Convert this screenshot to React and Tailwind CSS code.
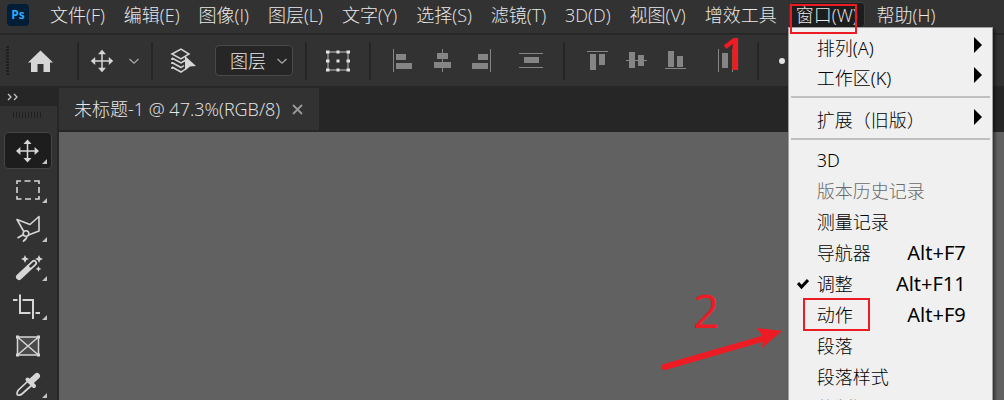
import React from "react";

const menus = ["文件(F)", "编辑(E)", "图像(I)", "图层(L)", "文字(Y)", "选择(S)", "滤镜(T)", "3D(D)", "视图(V)", "增效工具", "窗口(W)", "帮助(H)"];

const entries = [
  { label: "排列(A)", sub: true },
  { label: "工作区(K)", sub: true },
  { rule: true },
  { label: "扩展（旧版）", sub: true },
  { rule: true },
  { label: "3D" },
  { label: "版本历史记录", disabled: true },
  { label: "测量记录" },
  { label: "导航器", keys: "Alt+F7" },
  { label: "调整", keys: "Alt+F11", checked: true },
  { label: "动作", keys: "Alt+F9", marked: true },
  { label: "段落" },
  { label: "段落样式" },
  { label: "仿制源" },
];

function MoveIcon() {
  return (
    <svg width="24" height="24" viewBox="0 0 24 24" className="shrink-0" aria-hidden="true">
      <path d="M12 3v18M3 12h18" stroke="#d6d6d6" strokeWidth="1.5" />
      <path d="M12 .8l4 4.4H8zM12 23.2l4-4.4H8zM.8 12l4.4-4v8zM23.2 12l-4.4-4v8z" fill="#d6d6d6" />
    </svg>
  );
}

function Chevron() {
  return (
    <svg width="12" height="8" viewBox="0 0 12 8" className="shrink-0" fill="none" stroke="#a8a8a8" strokeWidth="1.3" aria-hidden="true">
      <path d="M1.5 2L6 6.2 10.5 2" />
    </svg>
  );
}

const tools = [
  { name: "移动工具", active: true, more: true, art: <g><path d="M14.500 5v18M5.500 14h18" stroke="#d6d6d6" strokeWidth="1.5" /><path d="M14.500 2.6l4 4.4h-8zM14.500 25.400l4-4.400h-8zM3 14L7.400 10v8zM26 14L21.600 10v8z" fill="#d6d6d6" /></g> },
  { name: "矩形选框工具", more: true, art: <path d="M4 8V5h4M11.500 5h6M21 5h5v3M26 11v6M26 20v3h-4M18 23h-6M8.500 23H4v-3M4 17v-6" fill="none" stroke="#d6d6d6" strokeWidth="1.6" /> },
  { name: "套索工具", more: true, art: <g fill="none" stroke="#d6d6d6" strokeWidth="1.6" strokeLinejoin="round"><path d="M10.500 16L4 4.500l13 5L26 1.500V16l-10.500 4" /><circle cx="13" cy="18.500" r="2.800" /><path d="M10.500 19.500L4.500 23M14 21.500q-.5 2.500-4 5" /></g> },
  { name: "魔棒工具", more: true, art: <g><path d="M6 23L21 9" stroke="#d6d6d6" strokeWidth="6" strokeLinecap="round" /><path d="M17.500 12.200L21 9" stroke="#323232" strokeWidth="2.600" strokeLinecap="round" /><path d="M12 1l1.200 2.800L16 5l-2.800 1.200L12 9l-1.200-2.800L8 5l2.800-1.200zM26 1l1.200 2.800L30 5l-2.800 1.200L26 9l-1.200-2.800L22 5l2.800-1.200zM25.500 12l.9 2 2 .9-2 .9-.9 2-.9-2-2-.9 2-.9z" fill="#d6d6d6" /></g> },
  { name: "裁剪工具", more: true, art: <g fill="none" stroke="#d6d6d6" strokeWidth="2"><path d="M0 7h4.500M7 1.500V20h10.500M9.500 7H20v19M22.500 20H27" /></g> },
  { name: "图框工具", art: <g fill="none" stroke="#d6d6d6" strokeWidth="1.500"><path d="M4.500 5h21v18h-21z" fill="#4a4a4a" /><path d="M4.500 5l21 18M25.500 5l-21 18" /><path d="M3 3.500h3v3H3zM24 3.500h3v3h-3zM3 21.500h3v3H3zM24 21.500h3v3h-3z" fill="#d6d6d6" stroke="none" /></g> },
  { name: "吸管工具", more: true, art: <g><path d="M15 10L5 19.500q-2 4 0 4.500 2 .8 4.500-1.500L19 14" fill="none" stroke="#d6d6d6" strokeWidth="1.700" /><path d="M14.500 8.500l6.500 6.500" stroke="#d6d6d6" strokeWidth="4" strokeLinecap="round" /><path d="M18 10.500L24 5" stroke="#d6d6d6" strokeWidth="6" strokeLinecap="round" /></g> },
];

function Tool({ tool }) {
  return (
    <button
      aria-label={tool.name}
      className={"relative flex h-[37px] w-12 items-center justify-center rounded border " + (tool.active ? "border-[#444444] bg-[#1d1d1d]" : "border-transparent")}
    >
      <svg width="30" height="28" viewBox="0 0 30 28" aria-hidden="true">{tool.art}</svg>
      {tool.more && (
        <svg width="5" height="5" viewBox="0 0 5 5" className="absolute right-1 bottom-1" aria-hidden="true">
          <path d="M5 0v5H0z" fill="#c4c4c4" />
        </svg>
      )}
    </button>
  );
}

const alignments = {
  left: ["左对齐", "M2.500 2v23", "M5 7h10v6H5zM5 16h16v6H5z"],
  center: ["水平居中对齐", "M12.500 2v23", "M7 6h11v6H7zM4 15h17v6H4z"],
  right: ["右对齐", "M21.500 2v23", "M9 7h10v6H9zM3 16h16v6H3z"],
  spread: ["垂直分布", "M0 6.500h24M0 20.500h24", "M5 10h15v6H5z"],
  top: ["顶对齐", "M2 4.500h21", "M5 7h6v16H5zM14 7h6v11h-6z"],
  middle: ["垂直居中对齐", "M2 13.500h21", "M5 5h6v16H5zM14 8h6v11h-6z"],
  bottom: ["底对齐", "M2 21.500h21", "M5 4h6v16H5zM14 9h6v11h-6z"],
  distribute: ["水平分布", "M5.500 2v23M19.500 2v23", "M9 6h6v15H9z"],
};

function Align({ kind }) {
  const [name, line, bars] = alignments[kind];
  return (
    <button aria-label={name} className="shrink-0">
      <svg width="24" height="28" viewBox="0 0 24 28" aria-hidden="true">
        <path d={line} stroke="#858585" />
        <path d={bars} fill="#858585" />
      </svg>
    </button>
  );
}

function Divider() {
  return <div className="h-[38px] w-0.5 shrink-0 bg-[#262626]" />;
}

function WindowMenu() {
  return (
    <div role="menu" className="absolute top-[27px] -left-px z-10 w-[205px] border border-[#a0a0a0] bg-[#f0f0f0] pt-0.5 font-['Noto_Sans','Noto_Sans_CJK_SC',sans-serif] text-black shadow-[2px_2px_3px_rgba(0,0,0,0.5)]">
      {entries.map((e, i) =>
        e.rule ? (
          <div key={i} role="separator" className="mx-0.5 mt-1.5 mb-1 h-0.5 bg-[#bfbfbf]" />
        ) : (
          <button key={i} role="menuitem" disabled={e.disabled} className={"relative flex w-full items-center pr-[26px] pl-7 " + (e.sub ? "h-[30px] pt-1.5" : "h-[31px]") + (e.disabled ? " text-[#6a6a6a]" : "")}>
            {e.checked && (
              <svg width="12" height="12" viewBox="0 0 12 12" className="absolute left-2" fill="none" stroke="#000" strokeWidth="3" aria-hidden="true">
                <path d="M1 5l3.500 4L11 2" />
              </svg>
            )}
            <span>{e.label}</span>
            {e.keys && <span className="ml-auto text-xl leading-6 font-normal">{e.keys}</span>}
            {e.sub && (
              <svg width="8" height="16" viewBox="0 0 8 16" className="absolute top-[7px] right-2.5" aria-hidden="true">
                <path d="M0 0l8 8-8 8z" />
              </svg>
            )}
            {e.marked && <span className="absolute -top-px left-3.5 h-[33px] w-[67px] border-2 border-[#ed1c24]" />}
          </button>
        )
      )}
    </div>
  );
}

export default function App() {
  return (
    <div className="flex h-screen flex-col overflow-hidden bg-[#323232] font-['Open_Sans','Noto_Sans_CJK_SC',sans-serif] text-[18px] leading-6 font-light whitespace-nowrap text-[#e8e8e8]">
      <header className="flex h-[35px] shrink-0 items-start border-b-2 border-[#272727] pl-[7px]">
        <div className="mt-1 flex size-[22px] shrink-0 items-center justify-center rounded bg-[#001e36] text-xs font-bold text-[#31a8ff]">Ps</div>
        <nav className="ml-3 flex gap-px">
          {menus.map((m) =>
            m === "窗口(W)" ? (
              <div key={m} className="relative mx-0.5">
                <button className="mt-0.5 h-[26px] rounded border border-[#3e3e3e] bg-[#1d1d1d] px-1.5 leading-6">{m}</button>
                <span className="absolute top-1 left-px z-20 h-[30px] w-[67px] border-2 border-[#ed1c24]" />
                <WindowMenu />
              </div>
            ) : (
              <button key={m} className="mt-0.5 h-[26px] px-[9px]">{m}</button>
            )
          )}
        </nav>
      </header>

      <div className="relative flex h-[53px] shrink-0 items-center border-b-2 border-[#272727] pl-1.5">
        <svg width="3" height="30" className="shrink-0" aria-hidden="true"><path d="M1.500 0v30" stroke="#1f1f1f" strokeWidth="3" strokeDasharray="2 1" /></svg>
        <button aria-label="主页" className="ml-[18px]">
          <svg width="26" height="24" viewBox="0 0 26 24" aria-hidden="true"><path d="M13.500 1.500L26 13.500h-3V23h-6.500v-8h-6v8H4v-9.500H1z" fill="#d6d6d6" /></svg>
        </button>
        <div className="ml-6"><Divider /></div>
        <button aria-label="移动工具选项" className="ml-[11px] flex items-center gap-3.5"><MoveIcon /><Chevron /></button>
        <div className="ml-[11px]"><Divider /></div>
        <button aria-label="自动选择" className="ml-4">
          <svg width="28" height="28" viewBox="0 0 28 28" fill="none" stroke="#d6d6d6" strokeWidth="1.500" aria-hidden="true">
            <path d="M3 7l9-5 8 5-8 5zM3 11l9 5 5-3M3 15.500l9 5 3-2M3 20l9 5 6-4M3 11v2M3 15v2M3 20v2" />
            <path d="M16 9l11 10-6 .5-5 4z" fill="#d6d6d6" stroke="none" />
          </svg>
        </button>
        <button className="ml-[18px] flex h-[31px] w-[78px] items-center justify-between rounded border border-[#494949] bg-[#262626] pr-1 pl-3.5">图层<Chevron /></button>
        <div className="ml-3"><Divider /></div>
        <button aria-label="显示变换控件" className="ml-[18px]">
          <svg width="28" height="24" viewBox="0 0 28 24" aria-hidden="true">
            <path d="M3 3h20v18H3z" fill="none" stroke="#8e8e8e" strokeWidth="1.500" />
            <path d="M1 1.500h3.500v3H1zM11.500 1.500h3v3h-3zM21.500 1.500H25v3h-3.500zM1 10.500h3.500v3H1zM11.500 10.500h3v3h-3zM21.500 10.500H25v3h-3.500zM1 19.500h3.500v3H1zM11.500 19.500h3v3h-3zM21.500 19.500H25v3h-3.500z" fill="#e4e4e4" />
          </svg>
        </button>
        <div className="ml-4"><Divider /></div>
        <div className="ml-5 flex gap-[15px]"><Align kind="left" /><Align kind="center" /><Align kind="right" /></div>
        <div className="ml-[26px] flex"><Align kind="spread" /></div>
        <div className="ml-5"><Divider /></div>
        <div className="ml-5 flex gap-[15px]"><Align kind="top" /><Align kind="middle" /><Align kind="bottom" /></div>
        <div className="ml-[26px] flex"><Align kind="distribute" /></div>
        <div className="ml-5"><Divider /></div>
        <button aria-label="更多选项" className="ml-5"><svg width="24" height="6" aria-hidden="true"><path d="M3 0a3 3 0 100 6 3 3 0 000-6M12 0a3 3 0 100 6 3 3 0 000-6M21 0a3 3 0 100 6 3 3 0 000-6" fill="#e2e2e2" /></svg></button>
        <span className="absolute -top-1.5 left-[720px] text-[46px] leading-[46px] font-semibold text-[#ed1c24]">1</span>
      </div>

      <div className="flex min-h-0 flex-1">
        <aside className="flex w-[59px] shrink-0 flex-col border-r-2 border-[#272727]">
          <div className="flex h-[18px] shrink-0 items-center bg-[#262626] pl-[7px]">
            <svg width="12" height="8" viewBox="0 0 12 8" fill="none" stroke="#c4c4c4" strokeWidth="1.300" aria-hidden="true"><path d="M1 1l3 3-3 3M7 1l3 3-3 3" /></svg>
          </div>
          <div className="flex h-[26px] shrink-0 items-start pt-1.5 pl-[13px]">
            <svg width="29" height="6" aria-hidden="true"><path d="M0 3h29" stroke="#202020" strokeWidth="6" strokeDasharray="1 2" /></svg>
          </div>
          <div className="flex flex-col items-start gap-0.5 pl-1">
            {tools.map((t) => <Tool key={t.name} tool={t} />)}
          </div>
        </aside>
        <main className="flex min-w-0 flex-1 flex-col">
          <div className="flex h-11 shrink-0 items-start bg-[#262626]">
            <div className="flex h-[42px] items-center gap-3 bg-[#323232] pr-4 pl-[15px]">
              <span>未标题-1 @ 47.3%(RGB/8)</span>
              <button aria-label="关闭"><svg width="11" height="11" viewBox="0 0 11 11" stroke="#999999" strokeWidth="1.800" aria-hidden="true"><path d="M1 1l9 9M10 1l-9 9" /></svg></button>
            </div>
          </div>
          <div className="relative flex-1 bg-[#616161]">
            <span className="absolute top-[155px] left-[634px] text-[46px] leading-[46px] font-normal text-[#ed1c24]">2</span>
            <svg width="130" height="50" viewBox="0 0 130 50" className="absolute top-[193px] left-[600px]" aria-hidden="true">
              <path d="M5.500 42L106 13" stroke="#ed1c24" strokeWidth="6" strokeLinecap="round" />
              <path d="M123 6L98 3l6 9-1 11z" fill="#ed1c24" />
            </svg>
          </div>
        </main>
      </div>
    </div>
  );
}
